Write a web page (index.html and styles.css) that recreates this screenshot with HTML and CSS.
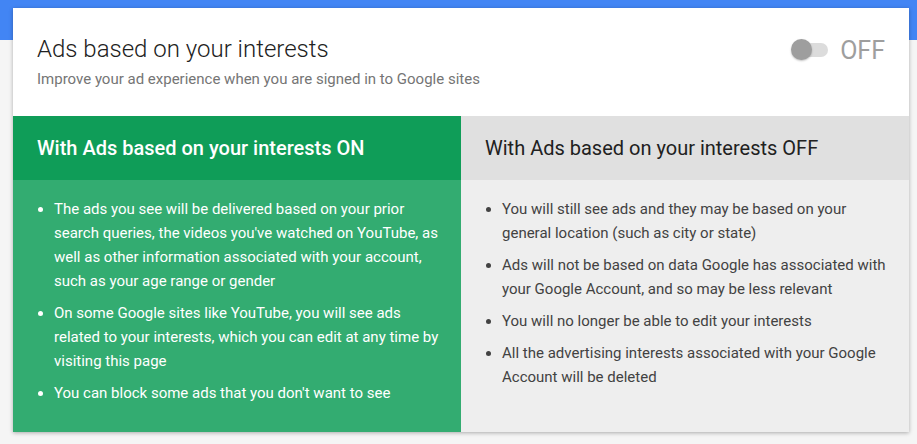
FILE: index.html
```html
<!DOCTYPE html>
<html lang="en">
<head>
    <meta charset="UTF-8">
    <title>Ads based on your interests</title>
    <link rel="stylesheet" href="styles.css">
</head>
<body>
    <div class="topbar"></div>
    <div class="card">
        <div class="card-head">
            <div class="head-text">
                <h1>Ads based on your interests</h1>
                <p class="sub">Improve your ad experience when you are signed in to Google sites</p>
            </div>
            <div class="toggle">
                <span class="track"><span class="knob"></span></span>
                <span class="state">OFF</span>
            </div>
        </div>
        <div class="cols">
            <div class="col on">
                <h2>With Ads based on your interests ON</h2>
                <ul>
                    <li>The ads you see will be delivered based on your prior search queries, the videos you've watched on YouTube, as well as other information associated with your account, such as your age range or gender</li>
                    <li>On some Google sites like YouTube, you will see ads related to your interests, which you can edit at any time by visiting this page</li>
                    <li>You can block some ads that you don't want to see</li>
                </ul>
            </div>
            <div class="col off">
                <h2>With Ads based on your interests OFF</h2>
                <ul>
                    <li>You will still see ads and they may be based on your general location (such as city or state)</li>
                    <li>Ads will not be based on data Google has associated with your Google Account, and so may be less relevant</li>
                    <li>You will no longer be able to edit your interests</li>
                    <li>All the advertising interests associated with your Google Account will be deleted</li>
                </ul>
            </div>
        </div>
    </div>
</body>
</html>
```

FILE: styles.css
```css
body {
    margin: 0;
    padding: 0;
    background-color: #f5f5f5;
    font-family: Roboto, Arial, sans-serif;
    height: 444px;
    overflow: hidden;
    position: relative;
}
.topbar {
    height: 40px;
    background-color: #4285f4;
}
.card {
    position: absolute;
    top: 8px;
    left: 13px;
    width: 896px;
    background-color: #fff;
    box-shadow: 0 1px 4px rgba(0, 0, 0, 0.3);
}
.card-head {
    display: flex;
    justify-content: space-between;
    height: 108px;
    padding: 0 24px;
}
h1 {
    margin: 27px 0 0;
    font-size: 24px;
    font-weight: 300;
    color: #212121;
    line-height: 28px;
}
.sub {
    margin: 6px 0 0;
    font-size: 15px;
    color: #757575;
    line-height: 20px;
}
.toggle {
    display: flex;
    align-items: center;
    height: 30px;
    margin-top: 27px;
}
.track {
    position: relative;
    width: 34px;
    height: 14px;
    border-radius: 7px;
    background-color: #dcdcdc;
    margin-right: 12px;
}
.knob {
    position: absolute;
    left: -3px;
    top: -4px;
    width: 21px;
    height: 21px;
    border-radius: 50%;
    background-color: #9e9e9e;
    box-shadow: 0 1px 2px rgba(0, 0, 0, 0.25);
}
.state {
    font-size: 25px;
    color: #9e9e9e;
    font-weight: 400;
}
.cols {
    display: flex;
}
.col {
    flex: 1;
    min-height: 316px;
}
h2 {
    margin: 0;
    height: 64px;
    padding: 0 24px;
    font-size: 20px;
    line-height: 64px;
}
.on {
    background-color: #33ac71;
    color: #fff;
}
.on h2 {
    background-color: #0f9d58;
    font-weight: 500;
}
.off {
    background-color: #eeeeee;
    color: #424242;
}
.off h2 {
    background-color: #e0e0e0;
    color: #212121;
    font-weight: 400;
}
ul {
    margin: 0;
    padding: 17px 20px 0 41px;
    font-size: 15px;
    line-height: 24px;
}
li {
    margin-bottom: 8px;
}
```
